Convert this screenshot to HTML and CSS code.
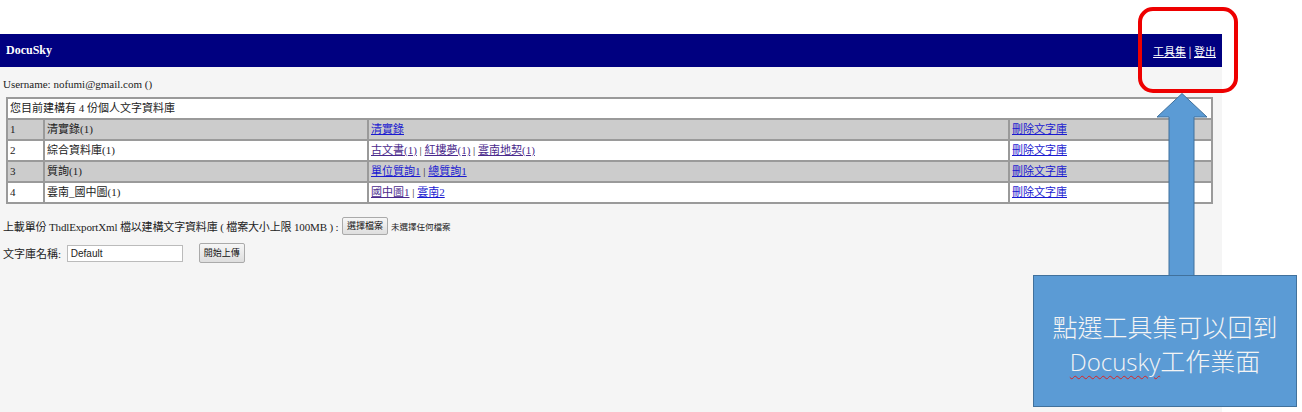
FILE: index.html
```html
<!DOCTYPE html>
<html lang="zh-Hant">
<head>
<meta charset="utf-8">
<title>DocuSky</title>
<link rel="stylesheet" href="styles.css">
</head>
<body>
<div class="screen">
  <header class="topbar">
    <span class="brand">DocuSky</span>
    <nav class="toplinks"><a href="#">工具集</a> | <a href="#">登出</a></nav>
  </header>
  <main class="content">
    <p class="user">Username: nofumi@gmail.com ()</p>
    <table class="dbs">
      <tr class="cap"><td colspan="4">您目前建構有 4 份個人文字資料庫</td></tr>
      <tr class="odd"><td class="c1">1</td><td class="c2">清實錄(1)</td><td class="c3"><a href="#">清實錄</a></td><td class="c4"><a href="#">刪除文字庫</a></td></tr>
      <tr><td class="c1">2</td><td class="c2">綜合資料庫(1)</td><td class="c3"><a class="v" href="#">古文書(1)</a> | <a class="v" href="#">紅樓夢(1)</a> | <a class="v" href="#">雲南地契(1)</a></td><td class="c4"><a href="#">刪除文字庫</a></td></tr>
      <tr class="odd"><td class="c1">3</td><td class="c2">質詢(1)</td><td class="c3"><a href="#">單位質詢1</a> | <a href="#">總質詢1</a></td><td class="c4"><a href="#">刪除文字庫</a></td></tr>
      <tr><td class="c1">4</td><td class="c2">雲南_國中圖(1)</td><td class="c3"><a class="v" href="#">國中圖1</a> | <a href="#">雲南2</a></td><td class="c4"><a href="#">刪除文字庫</a></td></tr>
    </table>
    <div class="row upload">上載單份 ThdlExportXml 檔以建構文字資料庫 ( 檔案大小上限 100MB ) : <span class="btn">選擇檔案</span><span class="nofile">未選擇任何檔案</span></div>
    <div class="row name">文字庫名稱: <span class="input">Default</span><span class="btn go">開始上傳</span></div>
  </main>
</div>
<div class="highlight"></div>
<svg class="arrow" width="56" height="186" viewBox="0 0 56 186">
  <polygon points="27,1.5 52,25 39,25 39,185 14,185 14,25 2,25" fill="#5b9bd5" stroke="#41719c" stroke-width="1"/>
</svg>
<div class="note">
  <div>點選工具集可以回到</div>
  <div><span class="sp">Docusky</span>工作業面</div>
</div>
</body>
</html>
```
FILE: styles.css
```css
html, body {
  margin: 0;
  padding: 0;
  background: #ffffff;
}
body {
  width: 1302px;
  height: 412px;
  overflow: hidden;
  position: relative;
  font-family: "Liberation Serif", "Noto Sans CJK TC", serif;
  font-size: 11px;
  color: #222;
}
.screen {
  margin-top: 34px;
  width: 1222px;
  height: 378px;
  background: #f5f5f5;
}
.topbar {
  height: 33px;
  background: #000080;
  display: flex;
  align-items: center;
  justify-content: space-between;
  padding: 0 6px;
  color: #fff;
}
.brand {
  font-weight: bold;
  font-size: 12px;
}
.toplinks {
  font-family: "Noto Sans CJK TC", sans-serif;
  font-size: 11px;
  color: #fff;
}
.toplinks a {
  color: #fff;
}
.content {
  padding: 0 3px;
}
.user {
  margin: 0;
  padding-top: 10px;
  height: 20px;
  line-height: 14px;
}
.dbs {
  margin-left: 3px;
  width: 1207px;
  border-collapse: collapse;
  border: 2px solid #8c8c8c;
  background: #fff;
  font-family: "Liberation Serif", "Noto Sans CJK TC", serif;
  font-size: 11px;
}
.dbs td {
  border: 2px solid #9a9a9a;
  height: 19px;
  padding: 0 2px;
  line-height: 17px;
  white-space: nowrap;
}
.dbs .odd td {
  background: #cccccc;
}
.c1 { width: 31px; }
.c2 { width: 318px; }
.c3 { width: 635px; }
.dbs a {
  color: #1a1ad0;
}
.dbs a.v {
  color: #4b2a8c;
}
.row {
  display: flex;
  align-items: center;
  white-space: pre;
}
.upload {
  margin-top: 12px;
  height: 20px;
  letter-spacing: -0.15px;
}
.name {
  margin-top: 6px;
  height: 22px;
}
.btn {
  display: inline-block;
  font-family: "Noto Sans CJK TC", sans-serif;
  font-size: 9px;
  line-height: 16px;
  padding: 0 4px;
  border: 1px solid #aaa;
  border-radius: 2px;
  background: linear-gradient(#f6f6f6, #dedede);
  color: #111;
  margin-left: 1px;
  letter-spacing: 0;
}
.nofile {
  font-family: "Noto Sans CJK TC", sans-serif;
  font-size: 8.5px;
  margin-left: 3px;
  letter-spacing: 0;
}
.input {
  display: inline-block;
  width: 108px;
  height: 15px;
  line-height: 15px;
  border: 1px solid #bbb;
  background: #fff;
  padding: 0 3px;
  margin-left: 3px;
  font-family: "Liberation Sans", sans-serif;
  font-size: 10px;
}
.go {
  margin-left: 16px;
  line-height: 18px;
}
.highlight {
  position: absolute;
  left: 1138px;
  top: 7px;
  width: 92px;
  height: 78px;
  border: 4px solid #ee0000;
  border-radius: 15px;
}
.arrow {
  position: absolute;
  left: 1155px;
  top: 92px;
}
.note {
  position: absolute;
  left: 1033px;
  top: 275px;
  width: 264px;
  height: 132px;
  box-sizing: border-box;
  background: #5b9bd5;
  border: 1px solid #41719c;
  display: flex;
  flex-direction: column;
  justify-content: center;
  align-items: center;
  padding-top: 6px;
  color: #f4f4f4;
  font-family: "Noto Sans CJK TC", sans-serif;
  font-weight: 300;
  font-size: 25px;
  line-height: 34px;
}
.sp {
  font-family: "Open Sans", "Noto Sans", sans-serif;
  font-size: 24px;
  text-decoration: underline wavy #d22;
  text-decoration-thickness: 1px;
  text-underline-offset: 4px;
}
```
